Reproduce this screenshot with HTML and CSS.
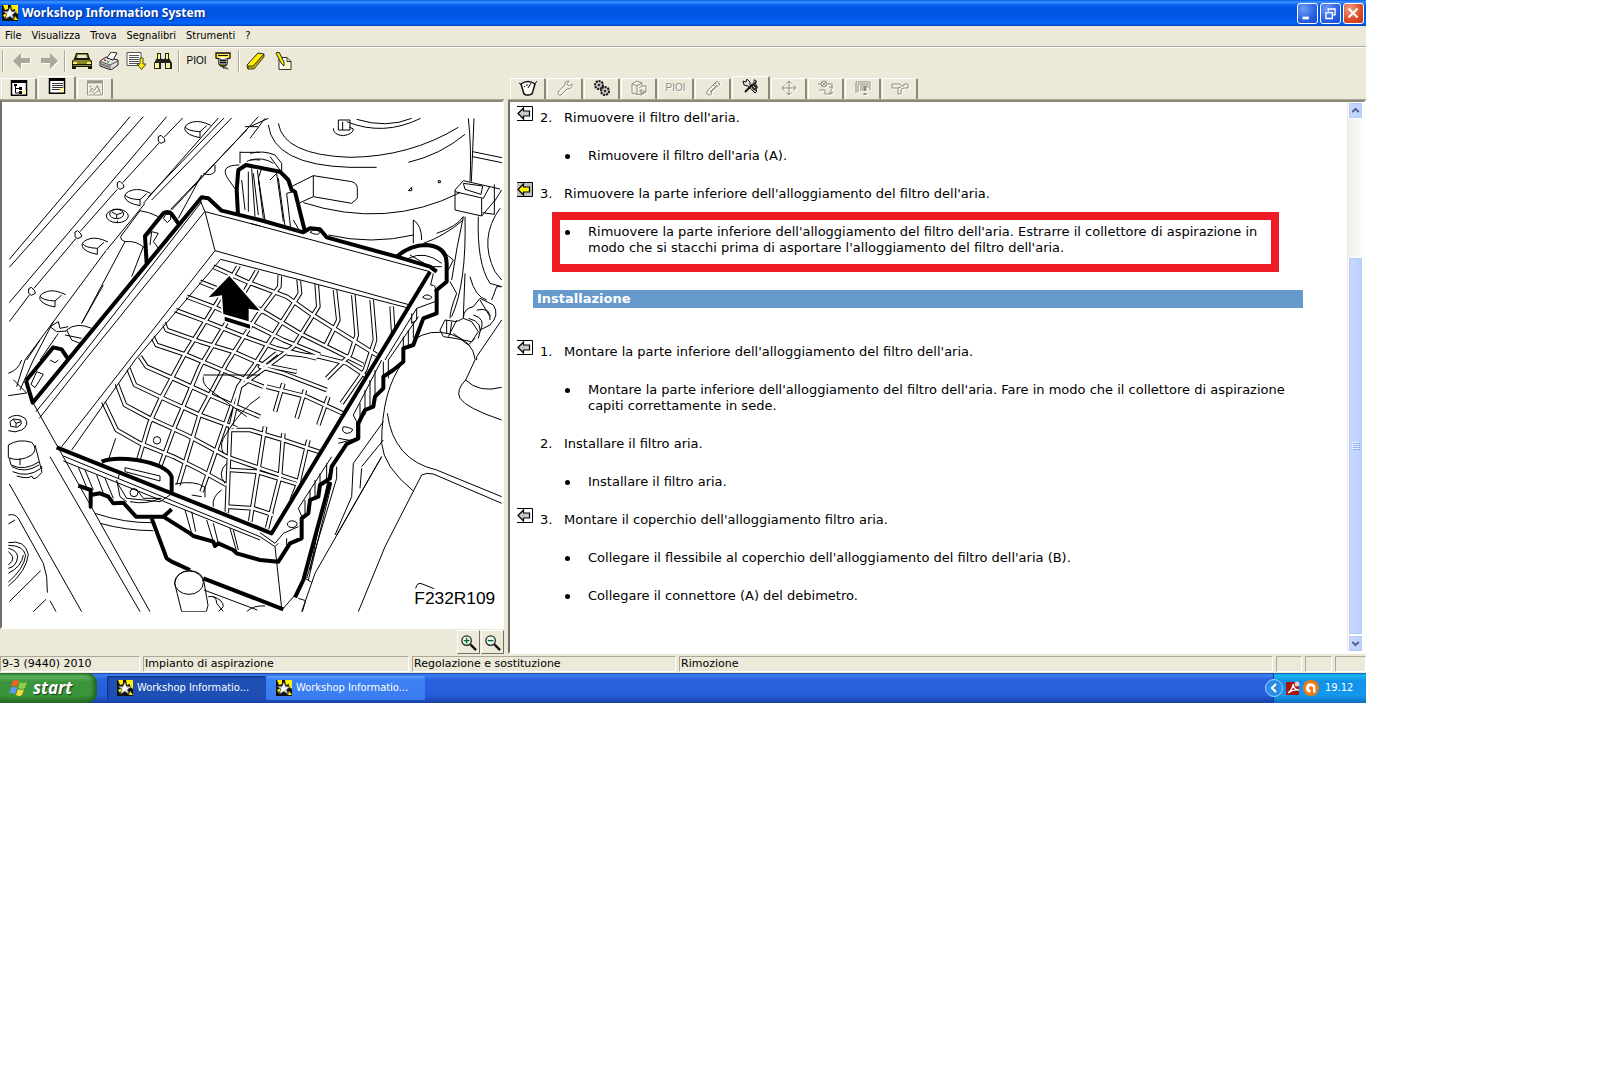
FILE: index.html
```html
<!DOCTYPE html>
<html lang="it">
<head>
<meta charset="utf-8">
<title>Workshop Information System</title>
<link rel="stylesheet" href="styles.css">
</head>
<body>
<svg class="sprite" aria-hidden="true">
  <symbol id="star" viewBox="0 0 16 16"><path d="M0 0h16v16H0z" fill="#111"/><path d="M1 0h5v4L3 5zM9 0h7v9l-3-2V4l-3 1zM1 10l4-2-2 5zM12 15l1-4 3 4z" fill="#fff200"/><path d="m8 2 1.500 4.200 5 .3-4 2.800 1.500 5L8 11.500 3.500 14 5 9 1 6.500l5-.3z" fill="#d8d8d8" stroke="#555" stroke-width=".5"/><path d="m8 4 1 4 3 0-3 2-5 2 2-4z" fill="#fff"/></symbol>
  <symbol id="back" viewBox="0 0 16 15"><path d="M0 .5h15.500v14H0" fill="none" stroke="#000"/><path d="M1 7.500 6.500 2v3h6v5h-6v3z" stroke="#000" stroke-width="1.200"/></symbol>
</svg>

<div class="desktop">
  <header class="titlebar">
    <svg class="i16"><use href="#star"/></svg>
    <h1>Workshop Information System</h1>
    <button class="win" aria-label="Riduci a icona"><svg viewBox="0 0 21 21"><path d="M5 14h7v3H5z" fill="#fff"/></svg></button>
    <button class="win" aria-label="Ripristina"><svg viewBox="0 0 21 21" fill="none" stroke="#fff"><path d="M8 8V5.500h7.500V12H13" stroke-width="1.500"/><path d="M5 9.500h7.500v6.500H5.500V9" stroke-width="1.500"/></svg></button>
    <button class="win close" aria-label="Chiudi"><svg viewBox="0 0 21 21"><path d="m5 5 10 10m0-10-10 10" stroke="#fff" stroke-width="2.300"/></svg></button>
  </header>

  <nav class="menu">
    <button>File</button><button>Visualizza</button><button>Trova</button><button>Segnalibri</button><button>Strumenti</button><button>?</button>
  </nav>

  <div class="toolbar">
    <i class="grip"></i>
    <button class="tool dim" aria-label="Indietro"><svg viewBox="0 0 20 18"><path d="m1 9 8-8v5h9v5H9v6z" fill="#aaa89b"/></svg></button>
    <button class="tool dim" aria-label="Avanti"><svg viewBox="0 0 20 18"><path d="m19 9-8-8v5H2v5h9v6z" fill="#aaa89b"/></svg></button>
    <i class="sep"></i>
    <button class="tool" aria-label="Veicolo"><svg viewBox="0 0 20 18"><path d="M4 1h12l2 6 2 2v8h-4v-2H4v2H0V9l2-2z" fill="#1a1a0a"/><path d="M5 2h10l1 4H4zM2 8h16l1 2H1zM1 13h18v1H1z" fill="#8b8530"/><path d="M6 3h8l1 3H5z" fill="#e8e6d0"/><path d="M5 10h10v2H5z" fill="#8b8530"/><path d="M1 10h4v2H1zM15 10h4v2h-4z" fill="#fff36a"/></svg></button>
    <button class="tool" aria-label="Stampa"><svg viewBox="0 0 20 18"><path d="M1 9 7 5l12 3v5l-7 5L1 14z" fill="#ddd" stroke="#222"/><path d="M1 9.500 11 13l8-4M11 13v5" fill="none" stroke="#555"/><path d="m8 6 4-6 6 1-4 7z" fill="#fff" stroke="#222"/><path d="m2 11 8 3v2l-8-3z" fill="#777"/><path d="m5 8 2 .5" stroke="#d22" stroke-width="1.500"/><path d="m8 9.500 2 .5" stroke="#2b2" stroke-width="1.500"/></svg></button>
    <button class="tool" aria-label="Documento"><svg viewBox="0 0 20 18"><path d="M1 .5h14v13H1z" fill="#fff" stroke="#555"/><path d="M3 3.500h10M3 5.500h10M3 7.500h10M3 9.500h10M3 11.500h10" stroke="#555"/><path d="M14 6h3v6h3l-4.500 5.500L11 12h3z" fill="#ffef00" stroke="#222" stroke-width=".8"/></svg></button>
    <button class="tool" aria-label="Cerca"><svg viewBox="0 0 20 18"><path d="M4 1h4v5l1 1h2l1-1V1h4v5l3 5v6h-7v-6H8v6H1v-6l3-5z" fill="#222"/><path d="M5 2h2v5H5zM13 2h2v5h-2zM2 11h4v5H2zM13 11h4v5h-4z" fill="#fff27a"/><path d="M2 11h1v5H2zM13 11h1v5h-1z" fill="#fff"/></svg></button>
    <i class="sep"></i>
    <button class="tool pio">PIOI</button>
    <button class="tool" aria-label="Diagnosi"><svg viewBox="0 0 20 18"><path d="M3 1h14v5l-3 1v5l-2 2H8l-2-2V7L3 6z" fill="#ffe92d" stroke="#111" stroke-width="1.300"/><path d="M6 5h8v7H6z" fill="#fff"/><path d="M5 3.500h10M7 6v6M9 7v6M11 7v6M13 6v6M7 8.500h6M7 10.500h6M10 14v2h4l1 1.500" fill="none" stroke="#111"/></svg></button>
    <i class="sep"></i>
    <button class="tool" aria-label="Evidenzia"><svg viewBox="0 0 20 18"><path d="m1 13 11-12 6 1L7 15l-5 2z" fill="#fff000" stroke="#222"/><path d="m7 14 11-12v3L8 17H2v-3z" fill="#b8a800" stroke="#222" stroke-width=".8"/></svg></button>
    <button class="tool" aria-label="Note"><svg viewBox="0 0 20 18"><path d="M6 5.500h8l4 4v8H6z" fill="#fff" stroke="#333"/><path d="M14 5.500v4h4" fill="none" stroke="#333"/><path d="M12 10h5v7h-5z" fill="#fffbc0"/><path d="m3 1 3-1 5 10v4l-3-3z" fill="#ffef00" stroke="#222"/></svg></button>
  </div>

  <main class="split">
    <section class="pane">
      <div class="tabs left">
        <button class="tab" aria-label="Struttura"><svg viewBox="0 0 18 16"><path d="M1.500.8h15v14.400h-15z" fill="#fff" stroke="#000" stroke-width="1.500"/><path d="M1 0h16v3H1z"/><path d="M5.500 5v8h4M5.500 8.500h4" fill="none" stroke="#000"/><path d="M4 4h3v2H4zM9 7h3v3H9zM9 11h3v3H9z"/><path d="M13 10h3v4h-3z" fill="#fff59a"/></svg></button>
        <button class="tab on" aria-label="Testo"><svg viewBox="0 0 18 16"><path d="M1.500.8h15v14.400h-15z" fill="#fff" stroke="#000" stroke-width="1.500"/><path d="M1 0h16v3H1z"/><path d="M4 5.500h11M4 7.500h11M4 9.500h11M4 11.500h11" stroke="#333"/><path d="M12 10h4v4h-4z" fill="#fff59a"/></svg></button>
        <button class="tab dim" aria-label="Immagine"><svg viewBox="0 0 18 16" fill="none" stroke="#999789"><path d="M1.500 1h15v14h-15z"/><path d="M1 2h16" stroke-width="3"/><path d="m3 13 3-5 2 3 3-5 4 8M3 6l3 1M11 5l3 6M4 10l5 4M9 13l5-3"/></svg></button>
      </div>
      <figure class="drawing">
        <svg viewBox="6 6 1500 1575" role="img" aria-label="Alloggiamento del filtro dell'aria">
          <defs>
            <path id="lug" d="M632 76Q600 60 578 66Q550 74 555 90Q562 106 600 113v-18q-38-2-44-14M600 95l20-18"/>
            <path id="hole" d="m-10-8 8-4 10 10 2 8-12 6-8-6z"/>
            <clipPath id="floor"><path d="M645 482 1225 618 815 1290 190 1045z"/></clipPath>
            <path id="ribs" d="M640 500l100 45 120 45 70 50 80 50 120 75M600 545l100 40 100 55 100 60 110 55 80 40M560 590l80 30 100 45 110 55 110 45M525 630l95 35 100 40 110 40 120 30M490 665l10 25 100 35 100 30 90 40 100 20M455 705l15 30 90 30 130 55 100 40M420 770l20 30 90 40 110 50 140 60M385 805l20 50 95 45 100 45 110 40M350 850l25 65 75 40 110 50 120 65 100 35 120 40M310 905l40 85 70 40 100 40 80 40 80 45"/>
            <path id="bars" d="M720 490l-70 120-100 160-70 130-32 70-33 110M775 505l-85 145-90 150-80 190-40 110M840 515l-2 45-68 90-90 140-80 150-65 215M895 530l5 50-70 110-70 110-45 60-110 315M950 550l5 70-75 120-160 120-30 130-10 260M1005 570l10 90-40 80M1060 585l10 120-20 60-70 70M1115 600l10 120-30 90-70 100M1175 620l5 80-60 150-60 100"/>
            <path id="dome" d="M690 990l60 0 100 30 120 40M690 1110l80 5 130 40M680 1220l80 5 60 20M800 860l120 30 130 60M860 760l100 10 80 20 60 40M830 760l-50 40 70 20 130 50M795 980l-20 130-30 190M850 1000l-10 130-40 160M925 1020l-30 130-20 50M850 850l-25 85M915 870l-25 85M985 890l-30 85"/>
          </defs>
          <!-- mesh of the housing floor: black ribs with a white core -->
          <g clip-path="url(#floor)">
            <g class="rib"><use href="#ribs"/><use href="#bars"/><use href="#dome"/></g>
            <g class="core"><use href="#ribs"/><use href="#bars"/><use href="#dome"/></g>
          </g>
          <!-- fender rail, upper left -->
          <g class="thin">
            <path d="M390 50 28 478M430 50 28 502M500 50 28 608M548 54l-56 58M478 128 368 248M352 268 240 395M228 415 102 565M88 585 28 665M655 54 430 310M672 54 445 290M695 54 455 300M775 50l-55 60-205 220M740 90 512 328M605 225l-70 130"/>
            <use href="#lug"/><use href="#lug" x="-180" y="204"/><use href="#lug" x="-308" y="350"/><use href="#lug" x="-435" y="508"/>
            <use href="#hole" x="485" y="118"/><use href="#hole" x="362" y="256"/><use href="#hole" x="235" y="404"/><use href="#hole" x="96" y="574"/>
            <ellipse cx="352" cy="348" rx="33" ry="20"/><ellipse cx="350" cy="342" rx="21" ry="14"/><path d="m336 336 14 8 18-6M350 344v10M340 328h22M352 368v-6"/>
            <path d="M420 332l-58 78q-2 10 13 15 36-4 60 20M420 332q25 3 55 18M435 310 320 450M318 452 75 780M375 425 245 670M430 440l-35 90M310 555l-65 115M200 690q30-25 75-5M200 690l15 30 25 10M150 680l25-15 5 20 25-5M150 680l20 15 30-2M160 665 100 780M175 700l-55 80M120 720l-40 60M195 705l50 10M610 220q20 10 35-5v-20"/>
            <path d="m490 355 8-12h14v15l-10 10zM440 410l15-15 20 5-15 25q5 5 15 20M455 395l-5 40"/>
            <path d="m775 80h-40M720 155v35M720 157h60M718 195q-60 0-35 40l25 35M740 185q10-8 40-5M745 215v120M760 220l15 125M725 240l10 90M772 210l8 60"/>
            <path d="M600 300l15 35 30 117M615 335l165 43M605 305 235 780M614 335 255 780M645 452 388 780M662 478 405 780"/>
          </g>
          <!-- housing walls and strut tower, upper right -->
          <g class="thin" transform="translate(750)">
            <path d="M85 70q15 95 215 102 180-2 325-90M55 75q15 120 245 127h80M475 187q95-22 170-84M290 65q110 45 222-10M320 58q90 28 165-3M0 80 55 55M0 115 45 55M265 60v30h35V60zM250 85q0 20 30 22 30-5 30-20l-12-6M278 65v25"/>
            <path d="M128 258l62-31 115 18q17 5 17 20v30l-17 15-115-20-40 18M190 227v63M160 308q250 80 470-30M235 405q130 30 255 0M560 400q60-20 80-50M520 430q60-20 120-70M490 430v-70q25 15 25 60M475 272l10-10v10h-10zM565 242h6v6h-6z"/>
            <path d="M655 55q10 90 5 190M672 55l-8 190M668 155l88 18M668 170l88 18M615 270l25-28 110 25M615 270v60l80 18 38-45v-50M615 275l85 20 20-37M695 295v53M640 250l5 18 48 15 5-25zM733 303v40l-35-5M755 270l-22 35M750 325q-65 90-15 190l20 25M645 350q5 200-40 300M685 350q-5 140 35 200l35 10M660 530q15 60 50 70M645 520l-5 130M640 350q-20 90-35 190"/>
            <path d="M0 160q40-10 75 5l20 25v25M0 180q40-10 70 10M60 170l30 40M5 205l10 145M35 205l-10 30 20 125M60 240l20-20 20 145M85 235l20 145M110 280l12 105M110 280l20-5M130 360l20 35M25 235l15 120"/>
            <path d="M0 370l540 145M180 397q15-15 30 0-5 12-30 0M475 475q50-25 100 15M480 465l60 35h35M585 460l25 20-15 30M550 520l-8 35q20 0 12 20M-105 452 480 615M-88 478 475 624M500 625l-95 155M485 640v30l15-10v-35l55-20M518 592q12-15 28 0-8 12-28 0M505 650l-90 130M490 665v50M475 690v45M460 710v35M600 545l20 35q-20 50-20 75"/>
            <path d="M490 720q50-35 110-18 70 20 76 78M570 690l15-30 35 5 20-10 25 10 20 30-20 30-50-10-35-5zM590 660v40M605 665l-5 40M640 655q0-30 30-35l20-25 40 20q20 30-10 60l-30 15M680 630q45-10 40 30M670 645q40 10 20 50M655 655q50 10 30 60M725 600l15-40h15M680 780v-10l75-110M610 700l45 35 20-20M620 660l-25 50M690 600l30 50"/>
          </g>
          <!-- bracket and cylinder parts, lower left -->
          <g class="thin" transform="translate(0 780)">
            <path d="M25 107l55-8-40-40M100 130l350 625M150 290l270 465M28 372l217 383M25 465q20-5 30 10l75 135 10 40 2 48M150 722l18 33M28 725l94-93M100 755l38-37M25 492l20-12M388 0 185 260M405 0 215 270M255 0 118 175M235 0 108 155M100 0 60 90M75 0 50 80M65 0q-10 30-40 40M110 35l20 8-25 40-12-10zM150 0l15 8 10-8"/>
            <path d="M25 175q25-18 50 0 15 20-10 35-20 10-40 2M30 185l10-8 22 3 2 12-12 10-20-3zM40 178l8 12v10M48 190l15-5"/>
            <path d="M25 255q30-20 70-8 20 20 0 38-35 22-70 8zM28 295l5 20q40 20 85-10l-13-50M35 320q40 22 82-5M38 335q45 20 85-10l-5-20M50 348q35 10 45 0M95 348q5 20 30-10v-20M60 295v20"/>
            <path d="M25 548q50-10 60 35-5 50-60 95M25 556q45 0 52 30-5 40-52 80M25 565q25 5 28 25-3 30-28 35M25 575q20 15 10 30l-10 10M25 640q40-20 45-55"/>
            <path d="M190 288l590 242M190 303l590 237M235 322l25 60M255 330l25 60M290 345l20 55M315 355l25 60M350 360l10 50 20 15M350 365l30 50 100 10 30-20M375 323l105 25v15l-105-28zM365 335q-10 5-10 20M415 395l15 20h55M325 300l22-65M555 450l20 70M575 455l12 60M620 480l20 65M640 490l15 60M690 505l20 70M700 510l15 60M390 425q50 10 90-10"/>
            <circle cx="402" cy="398" r="12"/><circle cx="471" cy="241" r="11"/>
            <path d="M285 460q90 30 175 28M300 490q80 22 160 22M525 372q60-12 90 10v30M575 405l30 5M610 50q-5 20 20 40l110 80M610 45h170M780 110q-60 40-100 110-25 30-10 60M680 310q-30 30-5 60M665 390q-30 20-25 50"/>
          </g>
          <!-- corner of the housing and battery cover, lower right -->
          <g class="thin" transform="translate(750 780)">
            <path d="M460 5Q395 90 395 250q5 70 95 143M412 160q18 140 148 170l195 80M325 755l80-195 110-215q15-8 35-3l205 88M675 0l-28 60q-30 30-17 55 20 30 125 65M647 60q40 40 108 22M155 755l40-115L395 290M310 310l90-125M335 320l65-80M310 310l-5 100-50 115M335 325l-5 60M395 290l-135 235M260 320v35l-90 300M240 330l-60 300M245 370l-70 290M165 655l20 12M145 715l22 7-10 33M75 560l20 185M100 745l35-40"/>
            <path d="M395 0 310 165l10 20v50l-55 15M265 235l45 8M375 30v90M360 60v90M345 90v75M330 130v60M400 5v75M415 0v55M280 200q15 0 28 8-2 12-20 12-15-5-8-20M245 290 145 445l15 35M230 310v60M210 340v55M195 360v60M180 390v50M165 420v50M112 490q8-12 25-5 10 10-5 17-20 3-20-12M30 518l45 32 25-30 45-20M30 530l45 30 10-10M110 535v20"/>
            <path d="M497 685q5-20 20-13l35 14"/>
          </g>
          <!-- heavy outline of the part being removed -->
          <g class="bold">
            <path d="M78 842 160 742l25 6 18 27M78 842l20 66L605 292l20 3 40 37 115 28 130 37 20-12 30 3 20 24 210 58 100 30 20 15M440 490l-5-82 55-68q15-8 25 2l20 28M714 345l-4-75 5-60 23-15 102 20 25 25 10 30 10 5 30 120"/>
            <path d="M1190 470q40-35 90-35 60 5 60 55v55l-30 25v70l-40 15-30 80-30 10v40l-30 25-30 20v35l-25 25-5 30-25 10-20 40v45l-35 17-45 68-5 35-30 20-5 35-25 10-5 40-20 15v60l-35 15-35 55L780 1380 710 1360 700 1350 655 1330 645 1338 640 1325 580 1308 570 1300 490 1250H408L370 1208 340 1210 325 1190 300 1180 272 1185V1220 1170L235 1157"/>
            <path d="M1290 515 815 1300 170 1042M305 1085q35-15 105-5 90 15 105 50v45M490 1250l25-22M455 1255l45 120 15 10 55 25M610 1435l240 93M990 1145l-80 295-25 52"/>
          </g>
          <!-- filler neck in front of the housing -->
          <g class="thin" transform="translate(0 780)">
            <path class="fill" d="M524 670q5-35 45-39 40 5 43 35l12 70-5 19h-74z"/><ellipse cx="567" cy="668" rx="43" ry="35"/>
            <path d="M625 710q25-5 25 20l20 25M640 710q30 10 30 30l-15 15M612 690l160 60M740 755q20-20 55-17"/>
            <path class="wipe" d="M520 758h300"/>
          </g>
          <path class="halo" d="M688 528l92 104-34-6v38l-76-22-4-56-40 6zM674 650l76 24v12l-76-24z"/>
          <text x="1243" y="1513">F232R109</text>
        </svg>
      </figure>
      <div class="zoombar">
        <button aria-label="Ingrandisci"><svg viewBox="0 0 18 18"><circle cx="7" cy="7" r="5" fill="#e8fff0" stroke="#222" stroke-width="1.300"/><path d="M4 7h6M7 4v6" stroke="#063" stroke-width="1.500"/><path d="m11 11 6 6" stroke="#111" stroke-width="2.500"/></svg></button>
        <button aria-label="Riduci"><svg viewBox="0 0 18 18"><circle cx="7" cy="7" r="5" fill="#e8fff0" stroke="#222" stroke-width="1.300"/><path d="M4 7h6" stroke="#063" stroke-width="1.500"/><path d="m11 11 6 6" stroke="#111" stroke-width="2.500"/></svg></button>
      </div>
    </section>

    <section class="pane">
      <div class="tabs right">
        <button class="tab" aria-label="Dati tecnici"><svg viewBox="0 0 18 16" fill="none" stroke="#111"><path d="M2 4q7-5 14 0l-3 10-3 1H7l-2-1z" fill="#fff" stroke-width="1.500"/><path d="M0 3l3 2M18 1l-3 4M9 8l3-5M5 6l1 1M8 4v2"/></svg></button>
        <button class="tab dim" aria-label="Attrezzi"><svg viewBox="0 0 18 16" fill="none" stroke="#8f8d80"><path d="m2 12 7-7q-1-4 4-4l-2 3 2 2 3-2q1 5-5 5l-6 6q-3 1-3-3z"/></svg></button>
        <button class="tab" aria-label="Componenti"><svg viewBox="0 0 18 16"><g fill="#bbb" stroke="#111" stroke-width="2"><circle cx="6" cy="5" r="4" stroke-dasharray="2 1"/><circle cx="12" cy="11" r="4" stroke-dasharray="2 1"/></g><circle cx="6" cy="5" r="1"/><circle cx="12" cy="11" r="1"/></svg></button>
        <button class="tab dim" aria-label="Ricambi"><svg viewBox="0 0 18 16" fill="none" stroke="#8f8d80"><path d="M2 4l5-3 5 2v3h4v6l-5 3-9-2zM2 4l5 2 5-3M7 6v9M9 8l3-2M11 9v5l5-3M9 11h5"/></svg></button>
        <button class="tab dim pio">PIOI</button>
        <button class="tab dim" aria-label="Misure"><svg viewBox="0 0 18 16" fill="none" stroke="#8f8d80"><path d="M4 10 13 1l3 3-9 8q2 3-2 3-4-1-1-5zM6 12l7-7M9 5l2 1M11 3l2 1"/></svg></button>
        <button class="tab on" aria-label="Regolazione e sostituzione"><svg viewBox="0 0 18 16"><path d="m1 3 3 1 1-3 3 3v3l7 6-2 2-7-7-4-1z" fill="#ddd" stroke="#111"/><path d="m12 1 3 2-1 3 2 3-2 4-3-1-2-4 2-2z" fill="#333"/><path d="M3 14l8-8" stroke="#111" stroke-width="2"/><path d="M12 3l1 1M11 8l2 2" stroke="#ccc"/></svg></button>
        <button class="tab dim" aria-label="Posizione"><svg viewBox="0 0 18 16" fill="none" stroke="#8f8d80"><path d="M9 1v14M2 8h14M6.500 3.500 9 1l2.500 2.500M6.500 12.500 9 15l2.500-2.500M4.500 5.500 2 8l2.500 2.500M13.500 5.500 16 8l-2.500 2.500"/></svg></button>
        <button class="tab dim" aria-label="Schema elettrico"><svg viewBox="0 0 18 16" fill="none" stroke="#8f8d80"><circle cx="7" cy="4" r="3"/><path d="M1 4h3M10 4h5v5M5 2l4 4M9 2 5 6M2 10h6v4h6M12 7h4M14 9v5M12 12l2 2 2-2"/></svg></button>
        <button class="tab dim" aria-label="Bollettini"><svg viewBox="0 0 18 16" fill="none" stroke="#8f8d80"><path d="M2 13V2h14v8M4 12V4h10v4M6 6h7M6 8h4M6 10h3"/><path d="M11 6v5M11 13v2" stroke-width="3"/></svg></button>
        <button class="tab dim" aria-label="Istruzioni"><svg viewBox="0 0 18 16" fill="none" stroke="#8f8d80"><path d="M1 4h8l2 2h2V4h4v4h-4l-3 1v5H7V8H1zM7 8l3-1"/></svg></button>
      </div>
      <div class="viewer">
        <article class="doc">
          <ol class="steps">
            <li class="step"><a href="#fig2" aria-label="Figura"><svg class="back"><use href="#back"/></svg></a><span>2.</span><div><p>Rimuovere il filtro dell'aria.</p><ul><li>Rimuovere il filtro dell'aria (A).</li></ul></div></li>
            <li class="step"><a href="#fig3" aria-label="Figura"><svg class="back now"><use href="#back"/></svg></a><span>3.</span><div><p>Rimuovere la parte inferiore dell'alloggiamento del filtro dell'aria.</p><ul><li class="marked">Rimuovere la parte inferiore dell'alloggiamento del filtro dell'aria. Estrarre il collettore di aspirazione in modo che si stacchi prima di asportare l'alloggiamento del filtro dell'aria.</li></ul></div></li>
          </ol>
          <h2>Installazione</h2>
          <ol class="steps">
            <li class="step"><a href="#fig4" aria-label="Figura"><svg class="back"><use href="#back"/></svg></a><span>1.</span><div><p>Montare la parte inferiore dell'alloggiamento del filtro dell'aria.</p><ul><li>Montare la parte inferiore dell'alloggiamento del filtro dell'aria. Fare in modo che il collettore di aspirazione capiti correttamente in sede.</li></ul></div></li>
            <li class="step"><i></i><span>2.</span><div><p>Installare il filtro aria.</p><ul><li>Installare il filtro aria.</li></ul></div></li>
            <li class="step"><a href="#fig5" aria-label="Figura"><svg class="back"><use href="#back"/></svg></a><span>3.</span><div><p>Montare il coperchio dell'alloggiamento filtro aria.</p><ul><li>Collegare il flessibile al coperchio dell'alloggiamento del filtro dell'aria (B).</li><li>Collegare il connettore (A) del debimetro.</li></ul></div></li>
          </ol>
        </article>
        <div class="scroll">
          <button aria-label="Su"><svg viewBox="0 0 16 16"><path d="m4 10 4-4 4 4" fill="none" stroke="#4d6185" stroke-width="2.500"/></svg></button>
          <i></i>
          <div class="thumb"><svg viewBox="0 0 8 8"><path d="M0 .5h7M0 2.500h7M0 4.500h7M0 6.500h7" stroke="#eef4fe"/><path d="M1 1.500h7M1 3.500h7M1 5.500h7M1 7.500h7" stroke="#8cb0f8"/></svg></div>
          <button aria-label="Giù"><svg viewBox="0 0 16 16"><path d="m4 6 4 4 4-4" fill="none" stroke="#4d6185" stroke-width="2.500"/></svg></button>
        </div>
      </div>
    </section>
  </main>

  <footer class="status">
    <span>9-3 (9440) 2010</span><span>Impianto di aspirazione</span><span>Regolazione e sostituzione</span><span>Rimozione</span><span></span><span></span><span></span>
  </footer>

  <div class="taskbar">
    <button class="start"><svg viewBox="0 0 20 20"><path d="M4 3q3-2 6 0L8 9q-3-2-6 0z" fill="#f0622a"/><path d="M11 4q3 2 7 0l-2 6q-4 2-7 0z" fill="#8cd04a"/><path d="M2 10q3-2 6 0l-2 6q-3-2-6 0z" fill="#5a9cf8"/><path d="M9 11q3 2 6 0l-2 6q-3 2-6 0z" fill="#fcd53a"/></svg>start</button>
    <button class="task active"><svg class="i16"><use href="#star"/></svg>Workshop Informatio...</button>
    <button class="task"><svg class="i16"><use href="#star"/></svg>Workshop Informatio...</button>
    <div class="tray">
      <button class="chev" aria-label="Mostra icone nascoste"><svg viewBox="0 0 18 18"><circle cx="9" cy="9" r="8.500" fill="#2d8be8" stroke="#9fd4fb"/><path d="m11 5-4 4 4 4" fill="none" stroke="#fff" stroke-width="2.200"/></svg></button>
      <svg class="i14" viewBox="0 0 14 14"><path d="M0 1h13v13H0z" fill="#a8140e"/><path d="M2 12q5-4 5-9 1 6 6 6-6-1-11 3z" fill="none" stroke="#fff" stroke-width="1.300"/><circle cx="11" cy="3" r="2.500" fill="#e8d0d0"/></svg>
      <svg class="i16" viewBox="0 0 16 16"><circle cx="8" cy="8" r="8" fill="#f07a12"/><path d="M6 12.500A4.800 4.800 0 1 1 12.500 9v3.500H10V8.500a2 2 0 1 0-2.500 1.500v2.500z" fill="#fff"/></svg>
      <time>19.12</time>
    </div>
  </div>
</div>
</body>
</html>
```
FILE: styles.css
```css
* { box-sizing: border-box; }
body { margin: 0; background: #fff; color: #000; font: 11px/14px "DejaVu Sans Condensed", "DejaVu Sans", sans-serif; }
button { margin: 0; padding: 0; border: 0; background: none; color: inherit; font: inherit; }
svg { display: block; }
h1, h2, p, ol, ul, figure { margin: 0; padding: 0; }
ol, ul { list-style: none; }
.sprite { position: absolute; width: 0; height: 0; }
.i16 { width: 16px; height: 16px; flex: none; }
.i14 { width: 14px; height: 14px; flex: none; }

.desktop { max-width: 1366px; background: #ece9d8; }

.titlebar { display: flex; align-items: center; gap: 2px; height: 26px; padding: 0 2px; background: linear-gradient(#0a5be8, #3d95ff 2px, #0a5ff0 5px, #0054e3 10px, #0058ea 18px, #0466fa 23px, #0040c0); color: #fff; }
.titlebar h1 { flex: 1; padding-left: 2px; font: bold 12px/18px "Noto Sans", sans-serif; text-shadow: 1px 1px 1px #0a2a80; }
.win { width: 21px; height: 21px; border: 1px solid #fff; border-radius: 3px; background: radial-gradient(circle at 30% 25%, #6f9cf6, #2a5fe0 60%, #1c4bd0); }
.win.close { background: radial-gradient(circle at 30% 25%, #f09a80, #dd4a22 60%, #c03a14); }

.menu { display: flex; gap: 10px; height: 21px; padding: 0 5px; border-bottom: 1px solid #aca899; }
.toolbar { display: flex; align-items: center; gap: 6px; height: 29px; padding: 0 2px 2px; border-top: 1px solid #fff; }
.tool { width: 21px; height: 20px; }
.tool svg { width: 20px; height: 18px; }
.grip, .sep { width: 2px; height: 22px; border-left: 1px solid #aca899; border-right: 1px solid #fff; }
.grip { margin-right: 2px; }
.sep { margin-left: -2px; }
.dim svg { filter: drop-shadow(1px 1px 0 #fff); }
.pio { font-family: "Liberation Sans", sans-serif; font-size: 10px; }
.pio.dim { color: #8f8d80; text-shadow: 1px 1px 0 #fff; }

.split { display: grid; grid-template-columns: 504px minmax(0, 1fr); column-gap: 4px; }
.pane { display: flex; flex-direction: column; }
.tabs { display: flex; align-items: flex-end; gap: 1px; height: 24px; border-bottom: 1px solid #aca899; }
.tabs.left { padding-left: 1px; }
.tabs.right { padding-left: 2px; }
.tab { display: grid; place-items: center; width: 36px; height: 21px; padding-bottom: 3px; border: 1px solid #fff; border-right: 2px solid #8b887a; border-bottom: 0; border-radius: 2px 2px 0 0; }
.tab.on { width: 38px; height: 23px; padding-bottom: 4px; }
.tab svg { width: 18px; height: 16px; }

.drawing { border: 2px solid; border-color: #8b887a #fff #fff #716f64; background: #fff; }
.drawing svg { width: 100%; height: auto; }
.thin { fill: none; stroke: #000; stroke-width: 3; }
.thin .fill { fill: #fff; }
.thin .wipe { stroke: #fff; stroke-width: 6; }
.rib, .core { fill: none; stroke-linejoin: round; }
.rib { stroke: #000; stroke-width: 14; }
.core { stroke: #fff; stroke-width: 8; }
.bold { fill: none; stroke: #000; stroke-width: 12; stroke-linejoin: round; }
.halo { stroke: #fff; stroke-width: 10; paint-order: stroke; }
.drawing text { font: 52px "Liberation Sans", sans-serif; }
.zoombar { display: flex; flex: 1; justify-content: flex-end; align-items: flex-start; gap: 1px; min-height: 25px; padding-top: 1px; }
.zoombar button { display: grid; place-items: center; width: 23px; height: 24px; border: 1px solid; border-color: #fff #716f64 #716f64 #fff; }
.zoombar svg { width: 17px; height: 17px; }

.viewer { display: grid; grid-template-columns: minmax(0, 1fr) 17px; flex: 1; border: 2px solid; border-color: #8b887a #fff #fff #716f64; background: #fff; }
.doc { padding: 8px 44px 46px 7px; font: 13px/16px "DejaVu Sans", sans-serif; }
.steps, .step ul { display: grid; gap: 22px; }
.step { display: grid; grid-template-columns: 23px 24px minmax(0, 1fr); }
.step p { margin-bottom: 22px; }
.step a { height: 16px; }
.step ul li { position: relative; padding-left: 24px; }
.step ul li::before { content: ""; position: absolute; left: 1px; top: 6px; width: 5px; height: 5px; border-radius: 50%; background: #000; }
.step .marked { padding-right: 34px; }
.step .marked::after { content: ""; position: absolute; inset: -12px 24px -16px -12px; border: 8px solid #ed1c24; }
.back { width: 16px; height: 15px; margin-top: -4px; fill: #c8c8c8; }
.back.now { background: #c0c0c0; fill: #fff200; }
.doc h2 { margin: 34px 0 36px 16px; padding: 0 4px; background: #69c; color: #fff; font: bold 13px/18px "DejaVu Sans", sans-serif; }

.scroll { display: grid; grid-template-rows: 17px 138px 1fr 17px; padding: 0 1px; background: linear-gradient(90deg, #eeede5, #fefefb); }
.scroll button, .thumb { display: grid; place-items: center; border: 1px solid #fff; border-radius: 2px; background: linear-gradient(90deg, #cbd8fd, #bad0fc); box-shadow: inset 0 0 0 1px #b4c8f6; }
.scroll button svg { width: 13px; height: 13px; }
.thumb svg { width: 8px; height: 8px; }

.status { display: grid; grid-template-columns: 140px 266px 264px minmax(0, 1fr) 26px 27px 31px; gap: 3px; padding: 2px 0 1px; font-family: "DejaVu Sans", sans-serif; }
.status span { height: 16px; padding: 0 1px; border: 1px solid; border-color: #aca899 #fff #fff #aca899; white-space: nowrap; }

.taskbar { display: flex; align-items: stretch; height: 30px; background: linear-gradient(#1941a5, #3d84f0 2px, #2a62e0 6px, #245edb 22px, #1941a5); color: #fff; }
.start { display: flex; align-items: center; gap: 4px; width: 97px; margin-right: 10px; padding-left: 9px; border-radius: 0 10px 10px 0; background: linear-gradient(#2d7a2d, #5fb45f 3px, #3c933c 9px, #3a963a 22px, #276a27); box-shadow: inset -3px 0 4px #1f5f1f; font: italic bold 17px/20px "Noto Sans", sans-serif; text-shadow: 1px 1px 1px #143c14; }
.start svg { width: 20px; height: 20px; }
.task { display: flex; align-items: center; gap: 4px; width: 159px; margin: 3px 0; padding-left: 10px; border-radius: 2px; background: linear-gradient(#5a9cff, #3c81f3 4px, #3a7cf0); white-space: nowrap; }
.task.active { background: #1e4fb5; box-shadow: inset 1px 1px 2px #0c2d78; }
.tray { display: flex; align-items: center; gap: 3px; width: 93px; margin-left: auto; background: linear-gradient(#0c59b9, #19b9f3 2px, #1290e8 8px, #1398ee 22px, #0f6fc0); border-left: 1px solid #0a3d8c; }
.chev { width: 18px; margin-left: -9px; }
.tray time { padding-left: 3px; }
```
